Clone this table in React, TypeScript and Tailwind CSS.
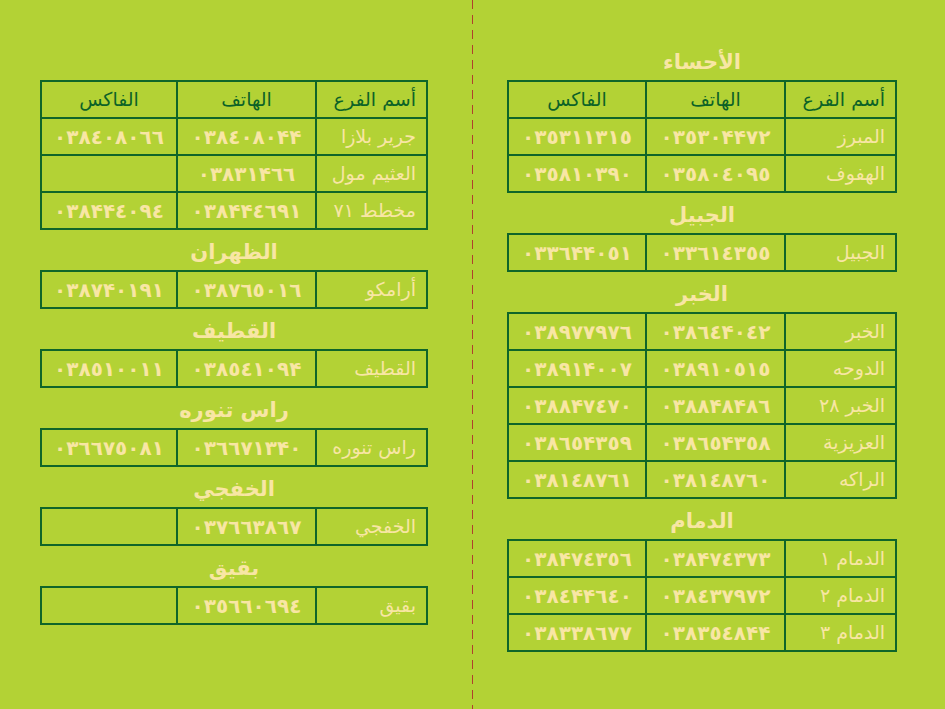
import React from "react";

type Row = [string, string, string];

type Section = {
  title?: string;
  header?: boolean;
  rows: Row[];
};

const left: Section[] = [
  {
    header: true,
    rows: [
      ["جرير بلازا", "٠٣٨٤٠٨٠۴۴", "٠٣٨٤٠٨٠٦٦"],
      ["العثيم مول", "٠٣٨٣١۴٦٦", ""],
      ["مخطط ٧١", "٠٣٨۴۴٤٦٩١", "٠٣٨۴۴٤٠٩٤"],
    ],
  },
  { title: "الظهران", rows: [["أرامكو", "٠٣٨٧٦٥٠١٦", "٠٣٨٧۴٠١٩١"]] },
  { title: "القطيف", rows: [["القطيف", "٠٣٨٥٤١٠٩۴", "٠٣٨٥١٠٠١١"]] },
  { title: "راس تنوره", rows: [["راس تنوره", "٠٣٦٦٧١٣۴٠", "٠٣٦٦٧٥٠٨١"]] },
  { title: "الخفجي", rows: [["الخفجي", "٠٣٧٦٦٣٨٦٧", ""]] },
  { title: "بقيق", rows: [["بقيق", "٠٣٥٦٦٠٦٩٤", ""]] },
];

const right: Section[] = [
  {
    title: "الأحساء",
    header: true,
    rows: [
      ["المبرز", "٠٣٥٣٠۴۴٧٢", "٠٣٥٣١١٣١٥"],
      ["الهفوف", "٠٣٥٨٠٤٠٩٥", "٠٣٥٨١٠٣٩٠"],
    ],
  },
  { title: "الجبيل", rows: [["الجبيل", "٠٣٣٦١٤٣٥٥", "٠٣٣٦۴۴٠٥١"]] },
  {
    title: "الخبر",
    rows: [
      ["الخبر", "٠٣٨٦٤۴٠٤٢", "٠٣٨٩٧٧٩٧٦"],
      ["الدوحه", "٠٣٨٩١٠٥١٥", "٠٣٨٩١۴٠٠٧"],
      ["الخبر ٢٨", "٠٣٨٨۴٨۴٨٦", "٠٣٨٨۴٧٤٧٠"],
      ["العزيزية", "٠٣٨٦٥۴٣٥٨", "٠٣٨٦٥۴٣٥٩"],
      ["الراكه", "٠٣٨١٤٨٧٦٠", "٠٣٨١٤٨٧٦١"],
    ],
  },
  {
    title: "الدمام",
    rows: [
      ["الدمام ١", "٠٣٨۴٧٤٣٧٣", "٠٣٨۴٧٤٣٥٦"],
      ["الدمام ٢", "٠٣٨٤٣٧٩٧٢", "٠٣٨٤۴۴٦٤٠"],
      ["الدمام ٣", "٠٣٨٣٥٤٨۴۴", "٠٣٨٣٣٨٦٧٧"],
    ],
  },
];

function BranchTable({ rows, header }: { rows: Row[]; header?: boolean }) {
  return (
    <table dir="rtl" className="w-full table-fixed border-collapse border-2 border-[#0f6529]">
      <colgroup>
        <col className="w-[111px]" />
        <col className="w-[139px]" />
        <col />
      </colgroup>
      <tbody>
        {header && (
          <tr className="h-[37px] text-[19px] text-[#0c6227]">
            <td className="border-2 border-[#0f6529] pr-[10px] text-right">أسم الفرع</td>
            <td className="border-2 border-[#0f6529] text-center">الهاتف</td>
            <td className="border-2 border-[#0f6529] text-center">الفاكس</td>
          </tr>
        )}
        {rows.map((r, i) => (
          <tr key={i} className="h-[37px] text-[#f8e6a4]">
            <td className="border-2 border-[#0f6529] pr-[10px] text-right text-[19px]">{r[0]}</td>
            <td className="border-2 border-[#0f6529] text-center text-[20px] font-bold">{r[1]}</td>
            <td className="border-2 border-[#0f6529] text-center text-[20px] font-bold">{r[2]}</td>
          </tr>
        ))}
      </tbody>
    </table>
  );
}

function Column({ sections }: { sections: Section[] }) {
  return (
    <div className="flex flex-col">
      {sections.map((s, i) => (
        <div key={i}>
          {s.title && (
            <div dir="rtl" className="flex h-[40px] items-center justify-center pt-[5px] text-[21px] font-bold text-[#f8e6a4]">
              {s.title}
            </div>
          )}
          <BranchTable rows={s.rows} header={s.header} />
        </div>
      ))}
    </div>
  );
}

export default function App() {
  return (
    <div className="flex h-[709px] w-[945px] overflow-hidden bg-[#b3d235] font-['DejaVu_Sans',sans-serif]">
      {/* left page */}
      <div className="w-[472px] shrink-0 pl-[40px] pr-[44px] pt-[80px]">
        <Column sections={left} />
      </div>

      {/* fold line */}
      <div className="w-px shrink-0 self-stretch bg-[repeating-linear-gradient(to_bottom,#b0402c_0_9px,transparent_9px_15px)]" />

      {/* right page */}
      <div className="flex-1 pl-[34px] pr-[48px] pt-[40px]">
        <Column sections={right} />
      </div>
    </div>
  );
}
